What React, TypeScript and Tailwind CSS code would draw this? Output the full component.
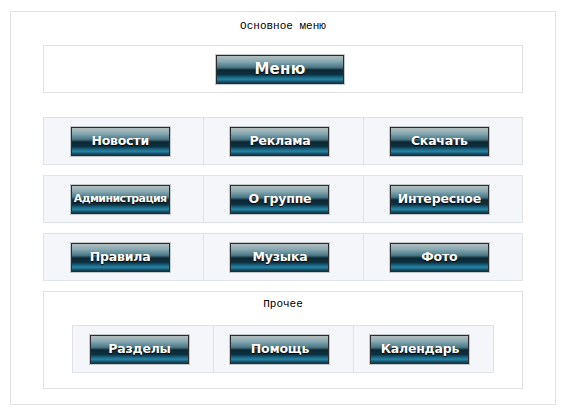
import React from 'react';

const rows = [
  ['Новости', 'Реклама', 'Скачать'],
  ['Администрация', 'О группе', 'Интересное'],
  ['Правила', 'Музыка', 'Фото'],
];

const other = ['Разделы', 'Помощь', 'Календарь'];

function GlossButton({ label, wide = false }: { label: string; wide?: boolean }) {
  return (
    <div
      className={`flex items-center justify-center border border-[#2b2b2b] shadow-[0_0_0_1px_#c4c8ca] bg-[linear-gradient(to_bottom,#b4bec0_0%,#86a9b2_20%,#4b7886_42%,#0c2733_52%,#0c3141_68%,#2586aa_86%,#113545_100%)] ${
        wide ? 'w-[128px] h-[29px]' : 'w-[99px] h-[29px]'
      }`}
    >
      <span
        className={`font-bold text-white [text-shadow:0_1px_1px_#000] ${
          wide
            ? 'text-[15px] tracking-[0.3px]'
            : label.length > 11
            ? 'text-[11px] tracking-[-0.6px]'
            : 'text-[12.5px] tracking-[-0.2px]'
        }`}
        style={{ fontFamily: '"DejaVu Sans", Verdana, sans-serif' }}
      >
        {label}
      </span>
    </div>
  );
}

function Row({ items }: { items: string[] }) {
  return (
    <div className="flex border border-[#dfe3e6] bg-[#f4f6f9]">
      {items.map((label, i) => (
        <div
          key={label}
          className={`flex w-1/3 items-center justify-center h-[46px] pr-[7px] ${
            i > 0 ? 'border-l border-[#dfe3e6]' : ''
          }`}
        >
          <GlossButton label={label} />
        </div>
      ))}
    </div>
  );
}

export default function App() {
  return (
    <div className="w-[565px] h-[413px] bg-white pt-[11px] pl-[10px]">
      <div className="w-[546px] h-[394px] border border-[#e2e2e2] px-[32px] pt-[8px]">
        <div
          className="text-center text-[11px] leading-[13px] text-black"
          style={{ fontFamily: '"Liberation Mono", "Courier New", monospace' }}
        >
          Основное меню
        </div>
        <div className="mt-[12px] h-[48px] border border-[#e2e2e2] flex items-center justify-center pr-[6px]">
          <GlossButton label="Меню" wide />
        </div>
        <div className="mt-[24px] flex flex-col gap-[10px]">
          {rows.map((r) => (
            <Row key={r[0]} items={r} />
          ))}
          <div className="border border-[#e2e2e2] px-[28px] pt-[6px] pb-[15px]">
            <div
              className="text-center text-[11px] leading-[13px] text-black mb-[14px]"
              style={{ fontFamily: '"Liberation Mono", "Courier New", monospace' }}
            >
              Прочее
            </div>
            <Row items={other} />
          </div>
        </div>
      </div>
    </div>
  );
}
